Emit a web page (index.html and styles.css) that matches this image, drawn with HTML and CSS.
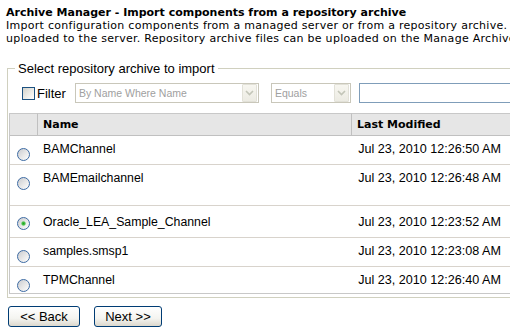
FILE: index.html
```html
<!DOCTYPE html>
<html lang="en">
<head>
    <meta charset="UTF-8">
    <title>Archive Manager</title>
    <link rel="stylesheet" href="styles.css">
</head>
<body>
    <div class="page">
        <h1 class="title">Archive Manager - Import components from a repository archive</h1>
        <p class="intro">Import configuration components from a managed server or from a repository archive.<br>uploaded to the server. Repository archive files can be uploaded on the Manage Archives page.</p>

        <fieldset class="archive-box">
            <legend>Select repository archive to import</legend>

            <div class="filter-row">
                <label class="filter-label"><input type="checkbox" class="xp-check"><span>Filter</span></label>
                <div class="combo combo-field">
                    <span class="combo-text">By Name Where Name</span>
                    <span class="combo-btn"><svg width="9" height="6" viewBox="0 0 9 6"><path d="M1 1 L4.5 4.5 L8 1" fill="none" stroke="#c3c5b8" stroke-width="1.6"/></svg></span>
                </div>
                <div class="combo combo-op">
                    <span class="combo-text">Equals</span>
                    <span class="combo-btn"><svg width="9" height="6" viewBox="0 0 9 6"><path d="M1 1 L4.5 4.5 L8 1" fill="none" stroke="#c3c5b8" stroke-width="1.6"/></svg></span>
                </div>
                <input type="text" class="filter-text">
            </div>

            <table class="archive-table">
                <colgroup>
                    <col class="col-select">
                    <col class="col-name">
                    <col class="col-date">
                </colgroup>
                <thead>
                    <tr>
                        <th class="th-select"></th>
                        <th class="th-name">Name</th>
                        <th>Last Modified</th>
                    </tr>
                </thead>
                <tbody>
                    <tr>
                        <td class="cell-radio"><input type="radio" name="archive" class="xp-radio"></td>
                        <td class="cell-name">BAMChannel</td>
                        <td class="cell-date">Jul 23, 2010 12:26:50 AM</td>
                    </tr>
                    <tr class="row-tall">
                        <td class="cell-radio"><input type="radio" name="archive" class="xp-radio"></td>
                        <td class="cell-name">BAMEmailchannel</td>
                        <td class="cell-date">Jul 23, 2010 12:26:48 AM</td>
                    </tr>
                    <tr class="row-mid">
                        <td class="cell-radio"><input type="radio" name="archive" class="xp-radio" checked></td>
                        <td class="cell-name">Oracle_LEA_Sample_Channel</td>
                        <td class="cell-date">Jul 23, 2010 12:23:52 AM</td>
                    </tr>
                    <tr>
                        <td class="cell-radio"><input type="radio" name="archive" class="xp-radio"></td>
                        <td class="cell-name">samples.smsp1</td>
                        <td class="cell-date">Jul 23, 2010 12:23:08 AM</td>
                    </tr>
                    <tr class="row-last">
                        <td class="cell-radio"><input type="radio" name="archive" class="xp-radio"></td>
                        <td class="cell-name">TPMChannel</td>
                        <td class="cell-date">Jul 23, 2010 12:26:40 AM</td>
                    </tr>
                </tbody>
            </table>
        </fieldset>

        <div class="nav-buttons">
            <button class="xp-button btn-back">&lt;&lt; Back</button>
            <button class="xp-button btn-next">Next &gt;&gt;</button>
        </div>
    </div>
</body>
</html>
```

FILE: styles.css
```css
html, body {
    margin: 0;
    padding: 0;
    background-color: white;
}
.page {
    width: 510px;
    height: 328px;
    overflow: hidden;
    padding: 7px 0 0 6px;
    box-sizing: border-box;
    color: #000;
}
.title {
    margin: 0;
    font-family: "DejaVu Sans", Verdana, sans-serif;
    font-size: 11px;
    font-weight: bold;
    line-height: 12px;
    white-space: nowrap;
}
.intro {
    margin: 0;
    font-family: "DejaVu Sans", Verdana, sans-serif;
    font-size: 11px;
    letter-spacing: 0.28px;
    line-height: 13px;
    white-space: nowrap;
}
.archive-box {
    width: 540px;
    margin: 16px 0 0 1px;
    padding: 7px 0 3px 1px;
    border: 1px solid #d0d0bf;
    font-family: "Liberation Sans", Arial, sans-serif;
}
.archive-box legend {
    margin-left: 6px;
    padding: 0 3px;
    font-size: 13px;
    line-height: 15px;
}
.filter-row {
    display: flex;
    align-items: center;
    height: 20px;
    padding-left: 13px;
}
.filter-label {
    display: flex;
    align-items: center;
    font-size: 13px;
}
.filter-label span {
    margin-left: 2px;
}
.xp-check {
    appearance: none;
    margin: 0;
    width: 13px;
    height: 13px;
    border: 1px solid #1c5180;
    box-sizing: border-box;
    background: linear-gradient(135deg, #d2d2cb 0%, #ecece8 55%, #ffffff 100%);
}
.combo {
    display: flex;
    align-items: center;
    justify-content: space-between;
    height: 20px;
    box-sizing: border-box;
    border: 1px solid #c9c7ba;
    background: white;
    color: #a0a0a0;
    font-size: 10.5px;
    padding-left: 3px;
}
.combo-field {
    width: 184px;
    margin-left: 9px;
}
.combo-op {
    width: 80px;
    margin-left: 12px;
}
.combo-btn {
    display: flex;
    align-items: center;
    justify-content: center;
    width: 13px;
    height: 16px;
    margin-right: 1px;
    background: linear-gradient(#f7f6f0, #ecebe3);
    border: 1px solid #e2e1d8;
    border-radius: 1px;
}
.filter-text {
    width: 170px;
    height: 20px;
    margin-left: 8px;
    box-sizing: border-box;
    border: 1px solid #7f9db9;
    padding: 0 3px;
}
.archive-table {
    width: 505px;
    margin-top: 10px;
    table-layout: fixed;
    border-collapse: separate;
    border-spacing: 0;
    border-left: 1px solid #c8c8c8;
}
.col-select {
    width: 28px;
}
.col-name {
    width: 314px;
}
.archive-table th {
    background-color: #e6e6e6;
    border-top: 1px solid #c8c8c8;
    border-bottom: 1px solid #c0c0c0;
    padding: 4px 5px 3px;
    font-family: "DejaVu Sans", Verdana, sans-serif;
    font-size: 11px;
    font-weight: bold;
    line-height: 14px;
    text-align: left;
}
.archive-table .th-select,
.archive-table .th-name {
    border-right: 1px solid #c0c0c0;
}
.archive-table td {
    vertical-align: top;
    border-bottom: 1px solid #d8d3cc;
    padding: 6px 5px 8px;
    line-height: 14px;
    white-space: nowrap;
}
.cell-name {
    font-size: 12.3px;
}
.cell-date {
    font-size: 12.6px;
    text-align: right;
    padding-right: 13px !important;
}
.archive-table .cell-radio {
    padding: 12px 0 0 7px;
}
.row-tall td {
    padding-bottom: 20px;
}
.row-mid td.cell-name,
.row-mid td.cell-date {
    padding-top: 9px;
}
.row-mid td.cell-radio {
    padding-top: 11px;
}
.row-last td {
    padding-bottom: 6px;
    border-bottom-color: #c8c8c8;
}
.xp-radio {
    appearance: none;
    display: block;
    margin: 0;
    width: 13px;
    height: 13px;
    border-radius: 50%;
    border: 1px solid #3d6ba3;
    box-sizing: border-box;
    background: linear-gradient(135deg, #c9cbd0 0%, #e6e6e6 50%, #ffffff 100%);
}
.xp-radio:checked {
    background: radial-gradient(circle, #21a121 0, #4cc44c 1.6px, transparent 2.6px),
                linear-gradient(135deg, #c9cbd0 0%, #e6e6e6 50%, #ffffff 100%);
}
.nav-buttons {
    display: flex;
    gap: 14px;
    margin: 8px 0 0 2px;
}
.xp-button {
    height: 21px;
    padding: 0;
    border: 1px solid #003c74;
    border-radius: 3px;
    background: linear-gradient(#ffffff 0%, #f4f4f0 60%, #dcd8cd 100%);
    font-family: "Liberation Sans", Arial, sans-serif;
    font-size: 13px;
    color: #000;
}
.btn-back {
    width: 72px;
}
.btn-next {
    width: 68px;
}
```
